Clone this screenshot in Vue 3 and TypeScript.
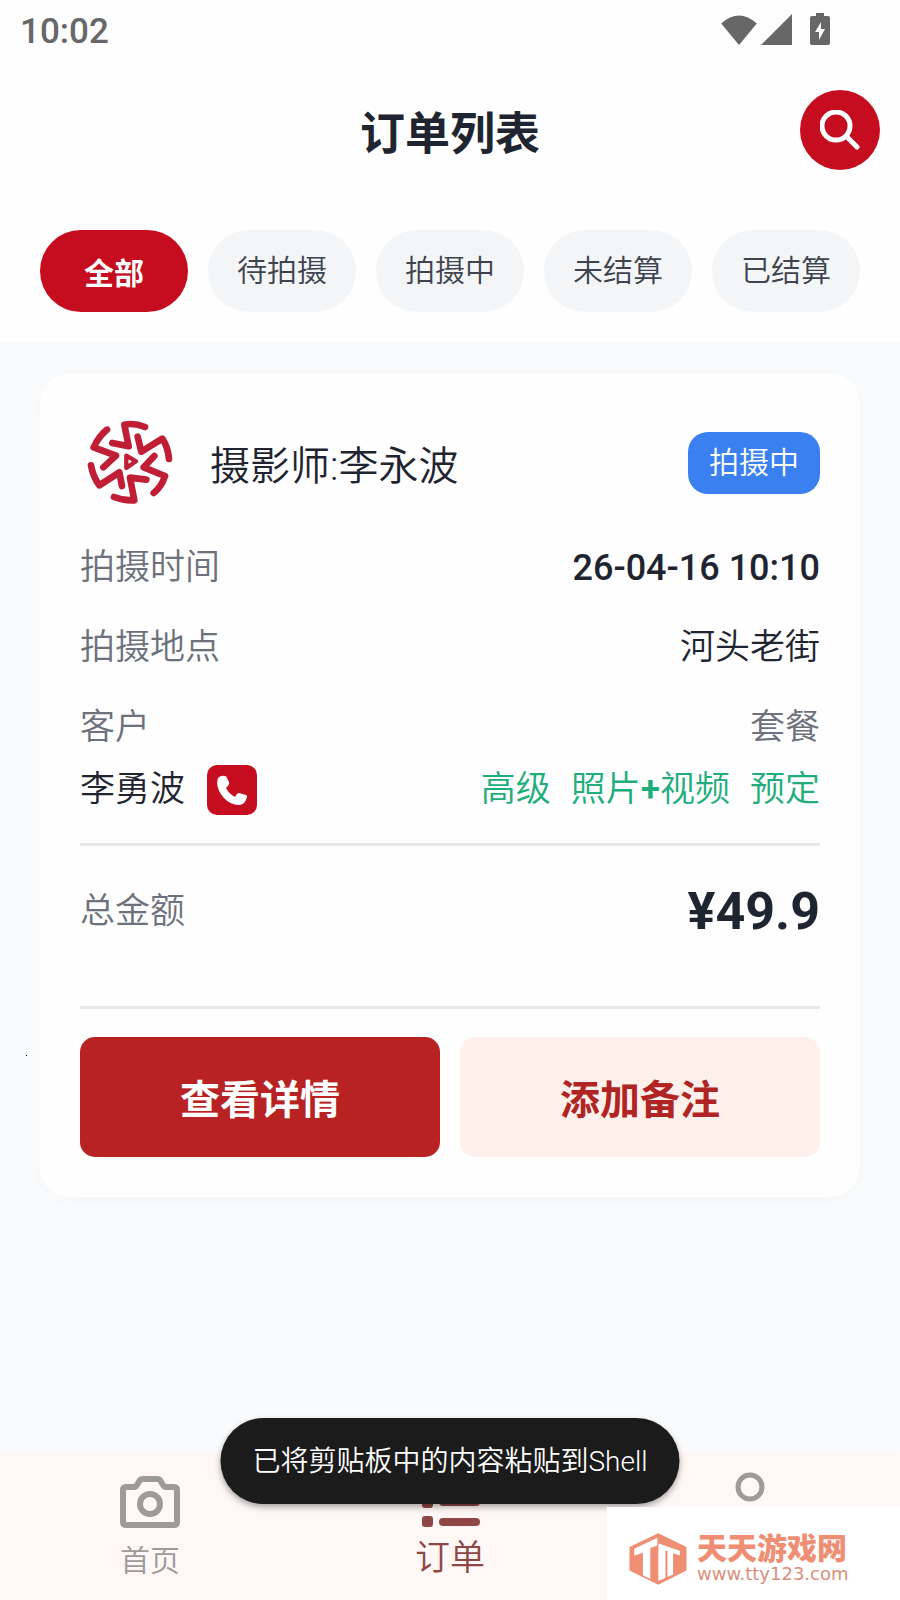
<script setup lang="ts">
import { ref } from 'vue'

const filters: string[] = ['全部', '待拍摄', '拍摄中', '未结算', '已结算']
const active = ref<string>('全部')

const order = {
  photographer: '李永波',
  status: '拍摄中',
  time: '26-04-16 10:10',
  place: '河头老街',
  customer: '李勇波',
  total: '¥49.9',
}
</script>

<template>
  <div class="page">
    <div class="status">
      <span class="clock">10:02</span>
      <div class="signals">
        <svg width="36" height="30" viewBox="0 0 38 32"><path d="M0 9Q19-8 38 9L19 32Z" /></svg>
        <svg width="31" height="31" viewBox="0 0 32 32"><path d="M32 0V32H0Z" /></svg>
        <svg class="battery" width="20" height="32" viewBox="0 0 20 32">
          <path d="M6 0h8v3h4q2 0 2 2v25q0 2-2 2H2q-2 0-2-2V5q0-2 2-2h4Z" />
          <path class="bolt" d="M11 9L5 19h4v8l6-11h-4Z" />
        </svg>
      </div>
    </div>

    <header class="header">
      <h1>订单列表</h1>
      <button class="search" aria-label="搜索">
        <svg width="40" height="40" viewBox="0 0 40 40" fill="none" stroke="#fff" stroke-width="5" stroke-linecap="round">
          <circle cx="16" cy="16" r="14" />
          <path d="M27 27L37 37" />
        </svg>
      </button>
    </header>

    <nav class="filters">
      <button v-for="f in filters" :key="f" :class="{ on: f === active }" @click="active = f">{{ f }}</button>
    </nav>

    <main class="main">
      <article class="card">
        <div class="card-head">
          <svg class="logo" viewBox="15 9 300 300" fill="none" stroke="#bf1e35" stroke-width="20" stroke-linecap="round" stroke-linejoin="round">
            <path d="M210 51Q180 38 148 44L161 109L112 99" />
            <path d="M96 59Q72 78 56 112L123 137L85 172" />
            <path d="M48 166Q54 200 73 226L133 187L141 228" />
            <path d="M117 261Q148 273 178 271L165 203L214 209" />
            <path d="M236 249Q260 230 270 198L206 172L238 138" />
            <path d="M282 147Q279 112 262 86L199 125L188 80" />
            <path d="M154 137V174L183 154Z" stroke-width="13" />
          </svg>
          <h2>摄影师:{{ order.photographer }}</h2>
          <span class="badge">{{ order.status }}</span>
        </div>

        <div class="row"><span class="label">拍摄时间</span><span class="time">{{ order.time }}</span></div>
        <div class="row"><span class="label">拍摄地点</span><span>{{ order.place }}</span></div>
        <div class="row"><span class="label">客户</span><span class="label">套餐</span></div>
        <div class="row people">
          <span class="customer">
            {{ order.customer }}
            <button class="call" aria-label="拨打电话">
              <svg width="30" height="30" viewBox="0 0 30 30" fill="#fff">
                <path d="M1 3Q4 0 8 1Q9 1 10 3L12 7Q13 9 9 13Q12 19 18 22Q20 18 22 18L29 20Q30 20 30 22Q28 30 22 30Q13 30 6 22Q-2 12 1 3Z" />
              </svg>
            </button>
          </span>
          <span class="plan"><span>高级</span><span>照片<b>+</b>视频</span><span>预定</span></span>
        </div>

        <div class="total"><span class="label">总金额</span><strong>{{ order.total }}</strong></div>

        <div class="actions">
          <button class="primary">查看详情</button>
          <button class="soft">添加备注</button>
        </div>
      </article>
      <i class="speck"></i>
    </main>

    <nav class="tabbar">
      <a href="#home">
        <svg width="60" height="52" viewBox="0 0 60 52" fill="none" stroke="#9e9a99" stroke-width="6" stroke-linejoin="round">
          <path d="M6 11H14Q16 11 17 9L20 4Q21 3 23 3H37Q39 3 40 4L43 9Q44 11 46 11H54Q57 11 57 14V46Q57 49 54 49H6Q3 49 3 46V14Q3 11 6 11Z" />
          <circle cx="30" cy="28" r="10" />
        </svg>
        <span>首页</span>
      </a>
      <a href="#orders" class="current">
        <svg width="60" height="50" viewBox="0 0 60 50" fill="#8f4644">
          <rect x="2" y="0" width="11" height="11" rx="3" /><rect x="19" y="1" width="41" height="8" rx="4" />
          <rect x="2" y="19" width="11" height="11" rx="3" /><rect x="19" y="20" width="41" height="8" rx="4" />
          <rect x="2" y="38" width="11" height="11" rx="3" /><rect x="19" y="40" width="41" height="8" rx="4" />
        </svg>
        <span>订单</span>
      </a>
      <a href="#me" aria-label="个人">
        <svg width="60" height="60" viewBox="0 0 60 60" fill="none" stroke="#9e9a99" stroke-width="5">
          <circle cx="30" cy="15" r="12" />
          <path d="M6 57Q6 38 30 38Q54 38 54 57Z" />
        </svg>
      </a>
    </nav>

    <div class="toast" role="status">已将剪贴板中的内容粘贴到Shell</div>

    <div class="site">
      <svg width="58" height="52" viewBox="17 13 172 155">
        <path fill="#ef8e72" d="M104 14L188 55V125L104 167L18 125V55Z" />
        <path fill="#fff" d="M32 60L101 27V50L80 58V150L58 139V72L32 81Z" />
        <path fill="#fff" d="M105 44L168 66V80L148 73V137L131 144V67L125 65V147L104 156V56Z" />
      </svg>
      <div class="site-text">
        <b>天天游戏网</b>
        <span>www.tty123.com</span>
      </div>
    </div>
  </div>
</template>

<style>
body {
  margin: 0;
}
</style>

<style scoped>
.page {
  position: relative;
  display: flex;
  flex-direction: column;
  min-height: 100vh;
  overflow: hidden;
  background: #fafbfd;
  color: #1f2530;
  font-family: Roboto, "Noto Sans CJK SC", sans-serif;
  font-size: 35px;
  font-weight: 350;
}
button {
  border: 0;
  padding: 0;
  font-family: inherit;
  font-weight: inherit;
  cursor: pointer;
}
svg {
  display: block;
}
h1,
h2 {
  margin: 0;
}
.status {
  display: flex;
  justify-content: space-between;
  align-items: center;
  height: 62px;
  padding: 0 70px 0 20px;
  background: #fefefe;
}
.clock {
  color: #676767;
  font-weight: 500;
}
.signals {
  display: flex;
  align-items: flex-end;
  gap: 4px;
  padding-bottom: 4px;
  fill: #676767;
}
.battery {
  margin-left: 14px;
}
.bolt {
  fill: #fff;
}
.header {
  display: grid;
  grid-template-columns: 80px 1fr 80px;
  align-items: center;
  padding: 28px 20px;
  background: #fefefe;
}
.header h1 {
  grid-column: 2;
  text-align: center;
  font-size: 45px;
  font-weight: 700;
}
.search {
  display: grid;
  place-items: center;
  width: 80px;
  height: 80px;
  border-radius: 50%;
  background: #c60d20;
}
.filters {
  display: flex;
  gap: 20px;
  padding: 32px 40px 30px;
  background: #fefefe;
}
.filters button {
  flex: 1;
  height: 82px;
  border-radius: 41px;
  background: #f3f5f7;
  color: #3d434f;
  font-size: 30px;
  line-height: 82px;
}
.filters .on {
  background: #c60d20;
  color: #fff;
  font-weight: 700;
  line-height: normal;
}
.main {
  position: relative;
  flex: 1;
  padding: 31px 40px;
}
.card {
  padding: 40px;
  border-radius: 30px;
  background: #fefefe;
  box-shadow: 0 4px 16px rgba(0, 0, 0, 0.025);
}
.card-head {
  display: flex;
  align-items: center;
}
.logo {
  width: 100px;
  height: 100px;
  margin-right: 30px;
}
.card-head h2 {
  flex: 1;
  font-size: 40px;
  font-weight: inherit;
}
.badge {
  padding: 0 21px;
  border-radius: 20px;
  background: #3b80f1;
  color: #fff;
  font-size: 30px;
  line-height: 62px;
}
.row {
  display: flex;
  justify-content: space-between;
  align-items: center;
  height: 50px;
  margin-top: 30px;
  line-height: 50px;
}
.label {
  color: #6c717b;
}
.time {
  font-size: 36px;
  font-weight: 500;
}
.people {
  margin-top: 12px;
}
.customer {
  display: flex;
  align-items: center;
  gap: 22px;
}
.call {
  display: grid;
  place-items: center;
  width: 50px;
  height: 50px;
  border-radius: 10px;
  background: #c60d20;
}
.plan {
  display: flex;
  gap: 20px;
  color: #20ad7c;
}
.plan b {
  font-weight: 600;
}
.total {
  display: flex;
  justify-content: space-between;
  align-items: center;
  height: 60px;
  margin-top: 28px;
  padding: 36px 0 64px;
  border-top: 3px solid #e8e8e9;
  border-bottom: 3px solid #e8e8e9;
  line-height: 60px;
}
.total strong {
  font-size: 52px;
  font-weight: 700;
}
.actions {
  display: flex;
  gap: 20px;
  margin-top: 28px;
}
.actions button {
  flex: 1;
  height: 120px;
  border-radius: 15px;
  font-size: 40px;
  font-weight: 700;
}
.actions .primary {
  background: #b82222;
  color: #fff;
}
.actions .soft {
  background: #fff0eb;
  color: #b02424;
}
.speck {
  position: absolute;
  left: 26px;
  top: 713px;
  width: 1px;
  height: 1px;
  background: #000;
}
.tabbar {
  display: grid;
  grid-template-columns: repeat(3, 1fr);
  height: 148px;
  background: #fef7f6;
  box-shadow: 0 -1px 4px rgba(254, 247, 246, 0.8);
}
.tabbar a {
  display: flex;
  flex-direction: column;
  align-items: center;
  gap: 10px;
  padding-top: 24px;
  color: #9e9a99;
  font-size: 30px;
  line-height: 46px;
  text-decoration: none;
}
.tabbar .current {
  gap: 8px;
  padding-top: 26px;
  color: #8f4644;
  font-size: 35px;
}
.tabbar a:last-child {
  padding-top: 20px;
}
.toast {
  position: absolute;
  left: 50%;
  bottom: 96px;
  transform: translateX(-50%);
  padding: 2px 32px 0;
  border-radius: 43px;
  background: #1b1b1b;
  color: #fff;
  font-size: 28px;
  line-height: 84px;
  white-space: nowrap;
  box-shadow: 0 3px 6px rgba(0, 0, 0, 0.35);
}
.site {
  position: absolute;
  right: 0;
  bottom: 0;
  display: flex;
  align-items: center;
  gap: 10px;
  box-sizing: border-box;
  width: 293px;
  height: 93px;
  padding: 10px 0 0 22px;
  background: #fff;
}
.site-text {
  display: flex;
  flex-direction: column;
  color: #ef8e72;
}
.site-text b {
  font-size: 30px;
  line-height: 30px;
  font-weight: 900;
}
.site-text span {
  font-family: "DejaVu Sans", sans-serif;
  font-size: 18px;
  font-weight: 400;
  line-height: 20px;
  color: #d88f7c;
}
</style>
